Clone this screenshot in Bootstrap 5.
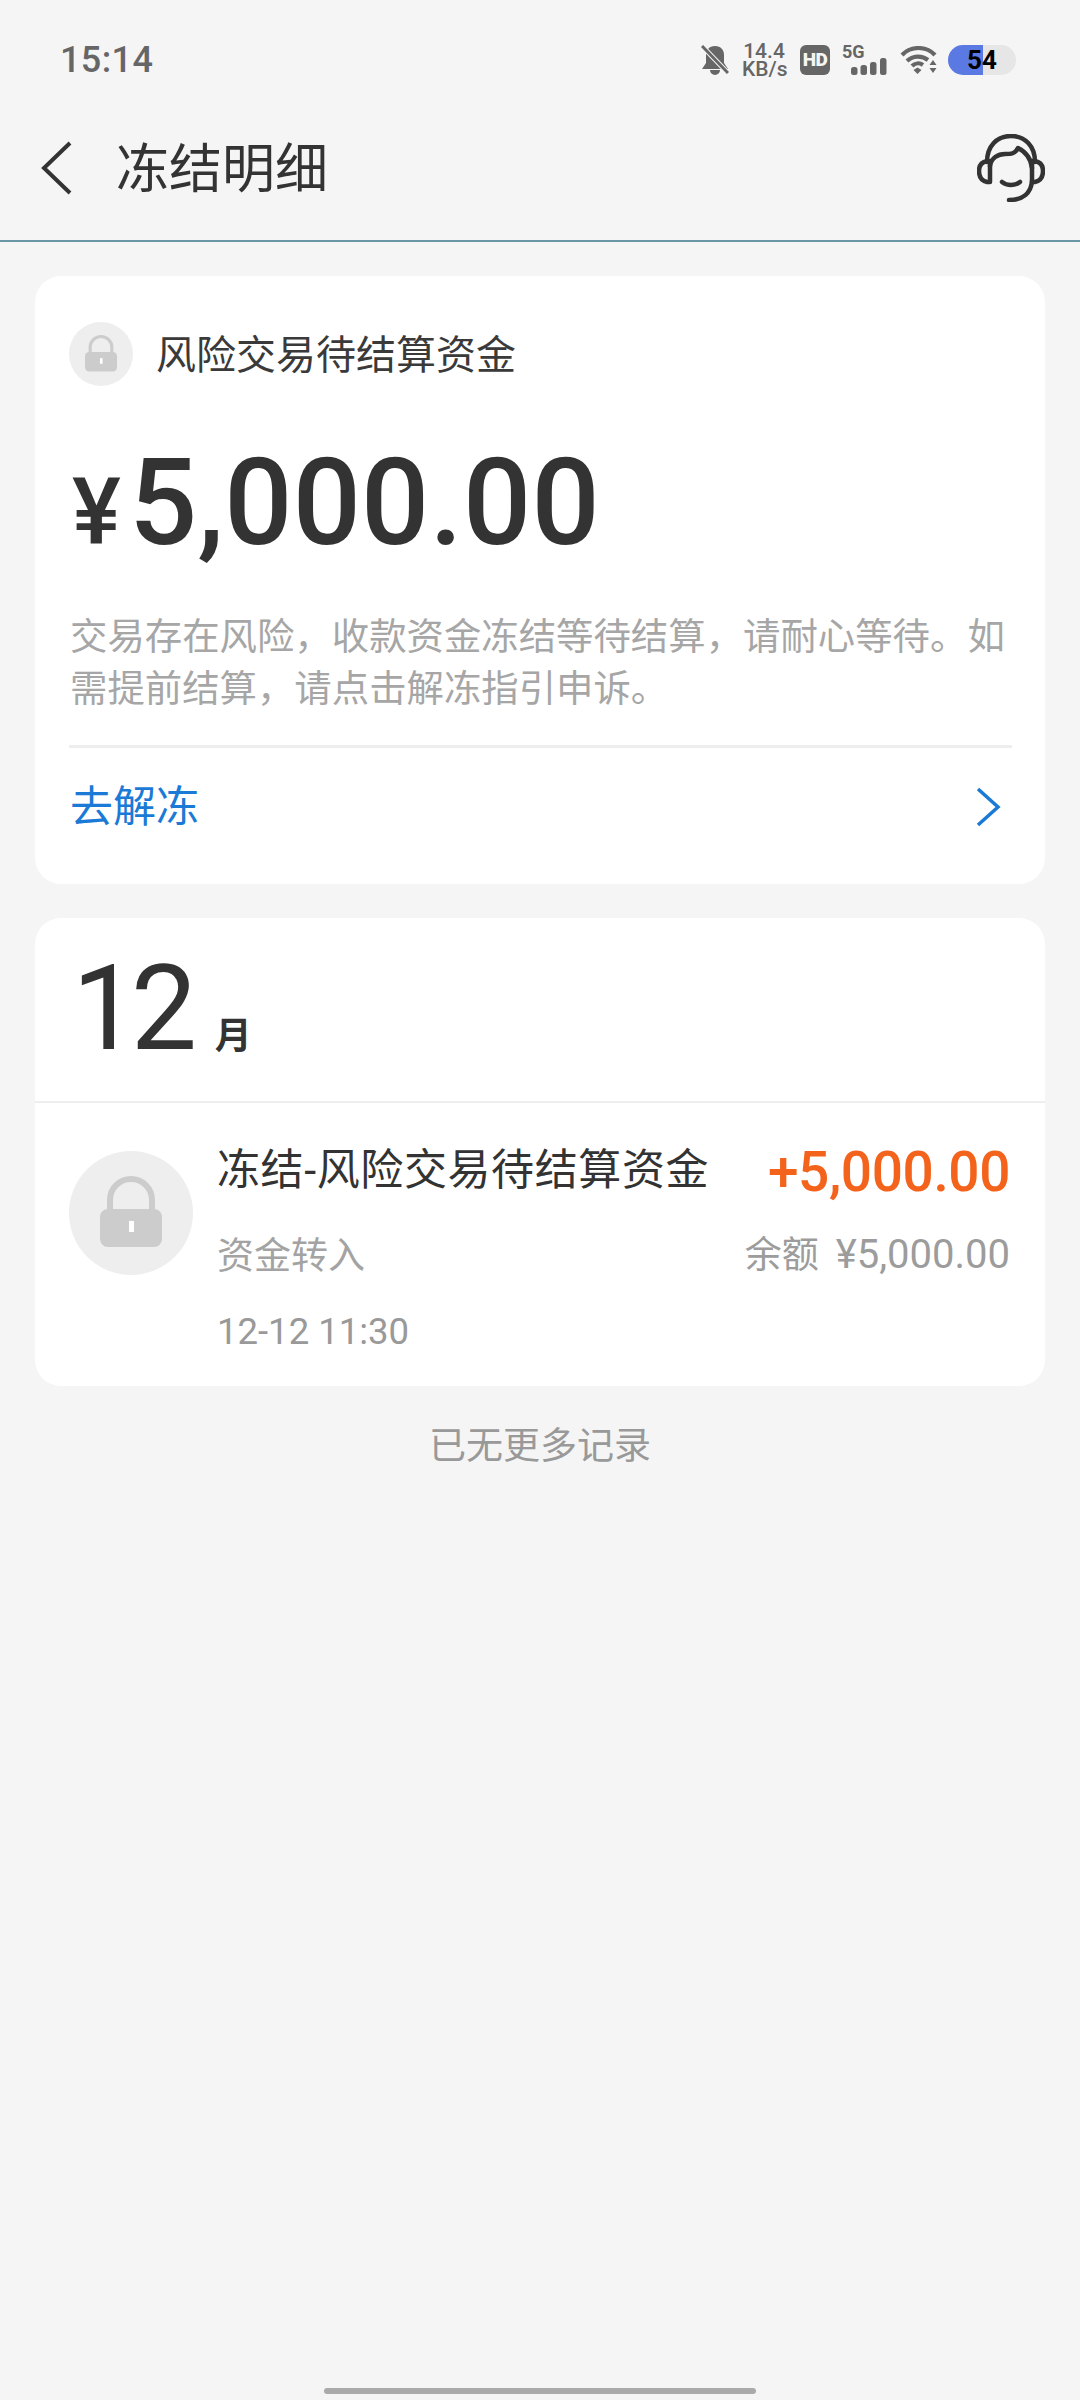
<!DOCTYPE html>
<html lang="zh-CN">
<head>
    <meta charset="UTF-8">
    <meta name="viewport" content="width=device-width, initial-scale=1.0">
    <title>冻结明细</title>
    <link href="https://cdn.jsdelivr.net/npm/bootstrap@5.3.1/dist/css/bootstrap.min.css" rel="stylesheet">
    <style>
        body {
            background-color: #f5f5f5;
            font-family: Roboto, "Noto Sans CJK SC", sans-serif;
            color: #333;
        }

        .page-wrap {
            width: 1080px;
            height: 2400px;
            background-color: #f5f5f5;
        }

        .status-row {
            height: 120px;
            padding: 0 64px 0 60px;
            color: #666;
        }

        .status-time {
            font-size: 36px;
            font-weight: 500;
            line-height: 1;
            letter-spacing: 0.4px;
        }

        .status-icons {
            height: 32px;
        }

        .speed-box {
            width: 44px;
            margin: 0 14px 0 13px;
            font-size: 21px;
            font-weight: 500;
            line-height: 18px;
            text-align: center;
        }

        .hd-box {
            width: 30px;
            height: 30px;
            margin-right: 12px;
            border-radius: 6px;
            background-color: #666;
            color: #f5f5f5;
            font-size: 19px;
            font-weight: 900;
            line-height: 30px;
            text-align: center;
            letter-spacing: -0.5px;
        }

        .net-box {
            width: 45px;
            height: 30px;
            margin-right: 13px;
        }

        .net-label {
            left: 0;
            top: -2px;
            font-size: 18px;
            font-weight: 700;
            line-height: 1;
        }

        .net-bars {
            right: 0;
            bottom: 0;
            display: block;
        }

        .batt-box {
            width: 68px;
            height: 30px;
            margin-left: 11px;
            border-radius: 15px;
            background-color: #e6e6e6;
            overflow: hidden;
        }

        .batt-fill {
            left: 0;
            top: 0;
            bottom: 0;
            background-color: #5b79e3;
        }

        .batt-text {
            font-size: 26px;
            font-weight: 700;
            line-height: 30px;
            color: #000;
            text-align: center;
        }

        .title-row {
            height: 122px;
            padding: 0 35px 24px 41px;
            border-bottom: 2px solid #6a97a8;
        }

        .title-text {
            margin-left: 44px;
            font-size: 53px;
            line-height: 70px;
            padding-top: 4px;
            color: #333;
        }

        .fund-card {
            margin: 34px 35px 0;
            border: 0;
            border-radius: 26px;
            background-color: #fff;
        }

        .fund-head {
            padding: 43px 34px 0;
            gap: 23px;
        }

        .fund-name {
            font-size: 40px;
            line-height: 64px;
            padding-top: 5px;
            color: #3a3a3a;
        }

        .fund-amount {
            margin: 55px 0 0 37px;
            line-height: 120px;
            font-weight: 500;
            color: #333;
        }

        .fund-yen {
            font-size: 92px;
            margin-right: 8px;
        }

        .fund-num {
            font-size: 120px;
            letter-spacing: 0.2px;
        }

        .fund-desc {
            margin: 38px 33px 0 35px;
            font-size: 37.400px;
            line-height: 52px;
            color: #a6a6a6;
        }

        .fund-line {
            margin: 30px 33px 0 34px;
            height: 3px;
            background-color: #eee;
        }

        .fund-link {
            height: 118px;
            margin-bottom: 18px;
            padding: 0 44px 0 35px;
            font-size: 43px;
            color: #1a7ad6;
        }

        .month-row {
            height: 185px;
            padding: 27px 0 0 37px;
            border-bottom: 2px solid #eee;
        }

        .month-num {
            font-size: 118px;
            line-height: 128px;
            letter-spacing: -7.500px;
            color: #333;
        }

        .month-unit {
            margin-left: 25px;
            font-size: 37px;
            font-weight: 700;
            color: #333;
        }

        .record-row {
            padding: 39px 35px 29px 34px;
        }

        .record-icon {
            margin: 9px 24px 0 0;
        }

        .record-name {
            font-size: 43px;
            line-height: 56px;
            letter-spacing: 0.6px;
            color: #333;
        }

        .record-sub {
            margin-top: 34px;
            font-size: 37px;
            line-height: 50px;
            color: #a3a3a3;
        }

        .record-time {
            margin-top: 25px;
            font-size: 36.500px;
            line-height: 50px;
            color: #999;
        }

        .record-amt {
            font-size: 55px;
            font-weight: 500;
            line-height: 60px;
            color: #f4631c;
            letter-spacing: -0.4px;
        }

        .record-bal {
            margin-top: 28px;
            font-size: 37px;
            line-height: 50px;
            color: #9c9c9c;
        }

        .record-bal-num {
            margin-left: 17px;
            font-size: 40px;
        }

        .list-end {
            margin-top: 36px;
            font-size: 37px;
            line-height: 50px;
            color: #999;
        }

        .home-bar {
            width: 432px;
            height: 6px;
            margin: auto auto 6px;
            border-radius: 3px;
            background-color: #aaa;
        }
    </style>
</head>
<body class="m-0">
    <svg width="0" height="0" class="d-block">
        <symbol id="lockIcon" viewBox="0 0 124 124">
            <circle cx="62" cy="62" r="62" fill="#eee"/>
            <path d="M41 60V49a21 21 0 0 1 42 0V60" fill="none" stroke="#ccc" stroke-width="6"/>
            <rect x="31" y="58" width="62" height="38" rx="8" fill="#ccc"/>
            <rect x="60" y="70" width="5" height="11" fill="#fff"/>
        </symbol>
    </svg>

    <div class="page-wrap d-flex flex-column">
        <!-- status bar -->
        <div class="status-row d-flex align-items-center justify-content-between">
            <div class="status-time">15:14</div>
            <div class="status-icons d-flex align-items-center">
                <svg width="28" height="30" viewBox="0 0 28 30">
                    <path d="M14 1c6 0 9 4 9 9v8l4 6H1l4-6v-8c0-5 3-9 9-9zM9 25h10a5 5 0 0 1-10 0z" fill="#666"/>
                    <path d="M1 1l26 27" stroke="#f5f5f5" stroke-width="5"/>
                    <path d="M1 1l26 27" stroke="#666" stroke-width="3"/>
                </svg>
                <div class="speed-box">14.4 KB/s</div>
                <div class="hd-box">HD</div>
                <div class="net-box position-relative">
                    <span class="net-label position-absolute">5G</span>
                    <svg class="net-bars position-absolute" width="36" height="17" viewBox="0 0 36 17">
                        <rect x="0" y="9" width="6.500" height="8" rx="2.500" fill="#666"/>
                        <rect x="9.500" y="7" width="6.500" height="10" rx="2.500" fill="#666"/>
                        <rect x="19" y="4" width="6.500" height="13" rx="2.500" fill="#666"/>
                        <rect x="29" y="0" width="6.500" height="17" rx="2.500" fill="#666"/>
                    </svg>
                </div>
                <svg width="37" height="28" viewBox="0 0 37 28">
                    <path d="M2 9a23 23 0 0 1 33 0" fill="none" stroke="#666" stroke-width="4.200"/>
                    <path d="M7 15a16 16 0 0 1 21 -1" fill="none" stroke="#666" stroke-width="4.200"/>
                    <path d="M12 20a8.500 8.500 0 0 1 11 -1" fill="none" stroke="#666" stroke-width="4.200"/>
                    <path d="M13.500 24l4-2.500 4 2.500-4 4z" fill="#666"/>
                    <path d="M33 14l3.500 5h-7zM33 27l-3.500-5h7z" fill="#666"/>
                </svg>
                <div class="batt-box position-relative">
                    <div class="batt-fill position-absolute" style="width: 51%"></div>
                    <div class="batt-text position-relative">54</div>
                </div>
            </div>
        </div>

        <!-- title -->
        <div class="title-row d-flex align-items-center">
            <svg width="31" height="54" viewBox="0 0 31 54">
                <path d="M29 2L3 27l26 25" fill="none" stroke="#333" stroke-width="4"/>
            </svg>
            <div class="title-text flex-grow-1">冻结明细</div>
            <svg width="68" height="68" viewBox="0 0 68 68">
                <g fill="none" stroke="#333" stroke-width="4.500" stroke-linecap="round" stroke-linejoin="round">
                    <path d="M10 28C10 12 20 2 34 2s24 10 24 26"/>
                    <path d="M10 27c-5 1-8 4-8 10s3 10 8 11h3V27z"/>
                    <path d="M58 27c5 1 8 4 8 10s-3 10-8 11h-3V27z"/>
                    <path d="M13 32c1-8 8-12 15-12 6 0 10 0 13-6 8 4 13 11 14 20"/>
                    <path d="M55 47c-1 12-9 19-23 19"/>
                    <path d="M25 48c5 4 13 4 18 0"/>
                </g>
            </svg>
        </div>

        <!-- frozen funds summary -->
        <div class="card fund-card">
            <div class="fund-head d-flex align-items-center">
                <svg width="64" height="64"><use href="#lockIcon"/></svg>
                <div class="fund-name">风险交易待结算资金</div>
            </div>
            <div class="fund-amount d-flex align-items-baseline">
                <span class="fund-yen">¥</span>
                <span class="fund-num">5,000.00</span>
            </div>
            <div class="fund-desc">交易存在风险&#65292;收款资金冻结等待结算&#65292;请耐心等待。如需提前结算&#65292;请点击解冻指引申诉。</div>
            <div class="fund-line"></div>
            <div class="fund-link d-flex align-items-center justify-content-between">
                <span>去解冻</span>
                <svg width="26" height="40" viewBox="0 0 26 40">
                    <path d="M3 2l20 18L3 38" fill="none" stroke="#1a7ad6" stroke-width="3.500"/>
                </svg>
            </div>
        </div>

        <!-- month records -->
        <div class="card fund-card">
            <div class="month-row d-flex align-items-baseline">
                <span class="month-num">12</span>
                <span class="month-unit">月</span>
            </div>
            <div class="record-row d-flex">
                <svg class="record-icon flex-shrink-0" width="124" height="124"><use href="#lockIcon"/></svg>
                <div class="flex-grow-1">
                    <div class="record-name">冻结-风险交易待结算资金</div>
                    <div class="record-sub">资金转入</div>
                    <div class="record-time">12-12 11:30</div>
                </div>
                <div class="text-end">
                    <div class="record-amt">+5,000.00</div>
                    <div class="record-bal">余额<span class="record-bal-num">¥5,000.00</span></div>
                </div>
            </div>
        </div>

        <div class="list-end text-center">已无更多记录</div>

        <div class="home-bar"></div>
    </div>

    <script src="https://cdn.jsdelivr.net/npm/bootstrap@5.3.1/dist/js/bootstrap.bundle.min.js"></script>
</body>
</html>
